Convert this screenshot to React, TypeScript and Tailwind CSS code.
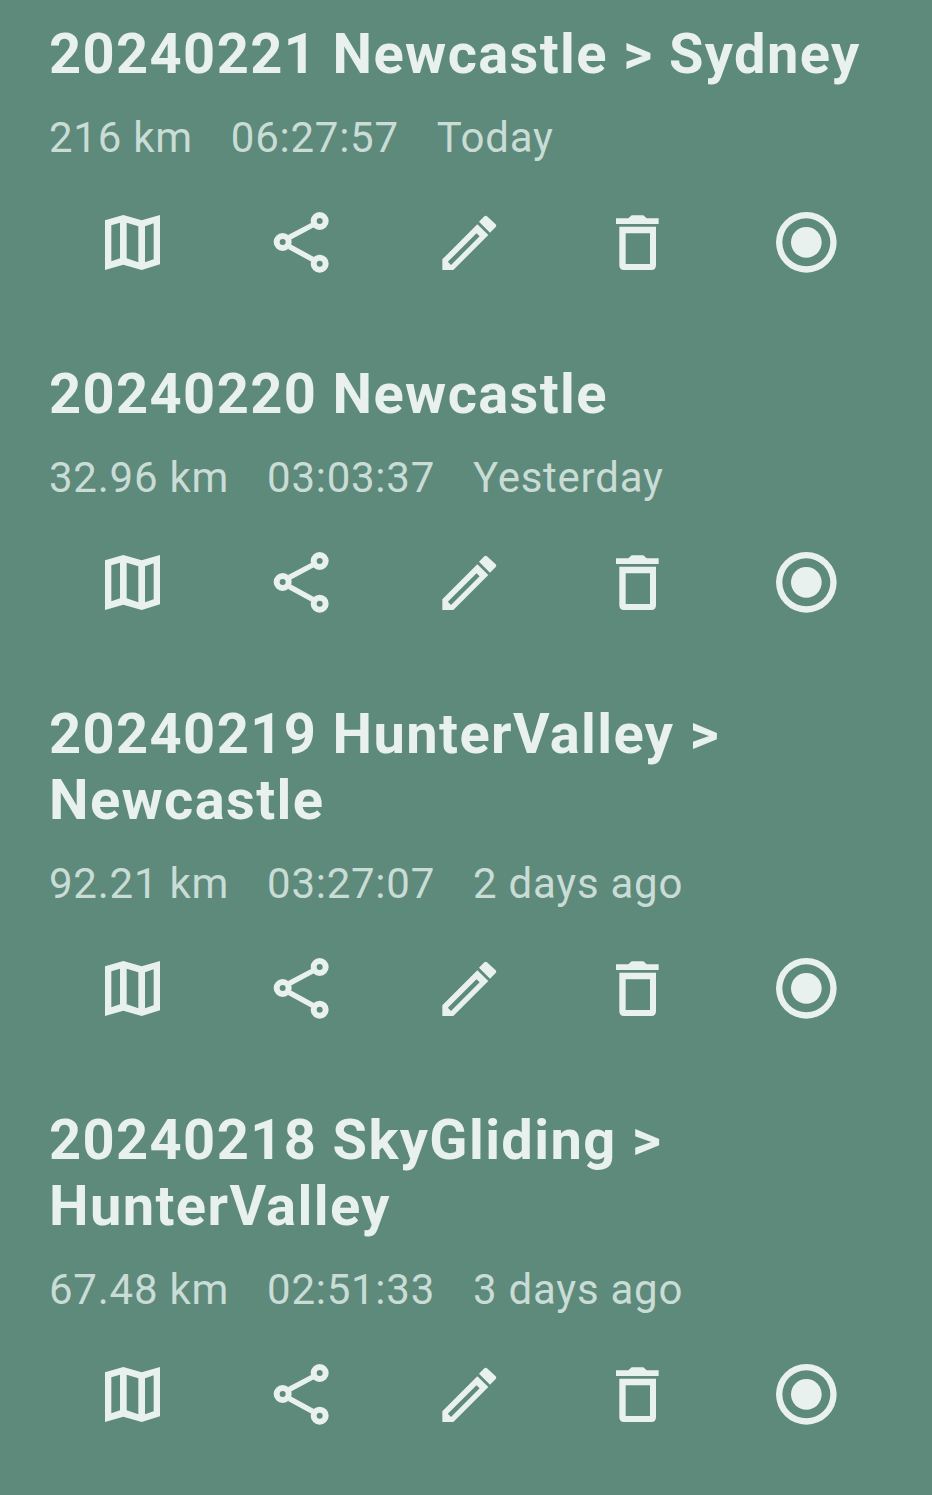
const items = [
  { title: '20240221 Newcastle > Sydney', distance: '216 km', time: '06:27:57', when: 'Today' },
  { title: '20240220 Newcastle', distance: '32.96 km', time: '03:03:37', when: 'Yesterday' },
  { title: '20240219 HunterValley > Newcastle', distance: '92.21 km', time: '03:27:07', when: '2 days ago' },
  { title: '20240218 SkyGliding > HunterValley', distance: '67.48 km', time: '02:51:33', when: '3 days ago' },
];

function MapIcon() {
  return (
    <svg viewBox="48 51 216 216" className="w-[72px] h-[72px] fill-[#e9f1ef]">
      <path
        fillRule="evenodd"
        d="M75 91L130 75L185 91L240 75V223L185 240L130 224L75 240ZM94 106V214L120 205V98ZM140 98V205L175 217V109ZM195 109V217L221 208V100Z"
      />
    </svg>
  );
}

function ShareIcon() {
  return (
    <svg viewBox="552 51 216 216" className="w-[72px] h-[72px] fill-none stroke-[#e9f1ef]">
      <path d="M625 142L695 105M625 170L695 208" strokeWidth="16" />
      <circle cx="605" cy="156" r="18" strokeWidth="18" />
      <circle cx="716" cy="93" r="18" strokeWidth="18" />
      <circle cx="716" cy="221" r="18" strokeWidth="18" />
    </svg>
  );
}

function PencilIcon() {
  return (
    <svg viewBox="39 51 216 216" className="w-[72px] h-[72px] fill-[#e9f1ef]">
      <path
        fillRule="evenodd"
        d="M67 208L172 103L205 135L100 240H67ZM169.5 129.5L83.5 215.5L93 225L179 139Z"
      />
      <path d="M177 95L193 79Q197 75 201 79L227 103Q231 107 227 111L210 128Z" />
    </svg>
  );
}

function TrashIcon() {
  return (
    <svg viewBox="543 51 216 216" className="w-[72px] h-[72px] fill-[#e9f1ef]">
      <path d="M588 85H625L635 76H670L680 85H716V102H588Z" />
      <path
        fillRule="evenodd"
        d="M598 110H708V226Q708 240 694 240H612Q598 240 598 226ZM617 130V222H690V130Z"
      />
    </svg>
  );
}

function RecordIcon() {
  return (
    <svg viewBox="90 51 216 216" className="w-[72px] h-[72px] fill-[#e9f1ef]">
      <path
        fillRule="evenodd"
        d="M199 66A91 91 0 1 1 199 248A91 91 0 1 1 199 66ZM199 85A72 72 0 1 0 199 229A72 72 0 1 0 199 85Z"
      />
      <circle cx="199" cy="157" r="46" />
    </svg>
  );
}

export default function App() {
  return (
    <div className="min-h-[1495px] bg-[#5e8a7b] pl-[49px] pr-[41px] pt-[21px] font-['Roboto',sans-serif]">
      {items.map((item) => (
        <div key={item.title} className="mb-[82px]">
          <h2 className="text-[56px] leading-[66px] font-bold text-[#e9f1ef] tracking-[1.4px]">{item.title}</h2>
          <div className="flex gap-[38px] mt-[18px] text-[42px] leading-[66px] text-[#c9dcd6] tracking-[0.75px]">
            <span>{item.distance}</span>
            <span>{item.time}</span>
            <span>{item.when}</span>
          </div>
          <div className="grid grid-cols-5 -ml-px mr-px mt-[36px] h-[72px]">
            <div className="flex justify-center"><MapIcon /></div>
            <div className="flex justify-center"><ShareIcon /></div>
            <div className="flex justify-center"><PencilIcon /></div>
            <div className="flex justify-center"><TrashIcon /></div>
            <div className="flex justify-center"><RecordIcon /></div>
          </div>
        </div>
      ))}
    </div>
  );
}
